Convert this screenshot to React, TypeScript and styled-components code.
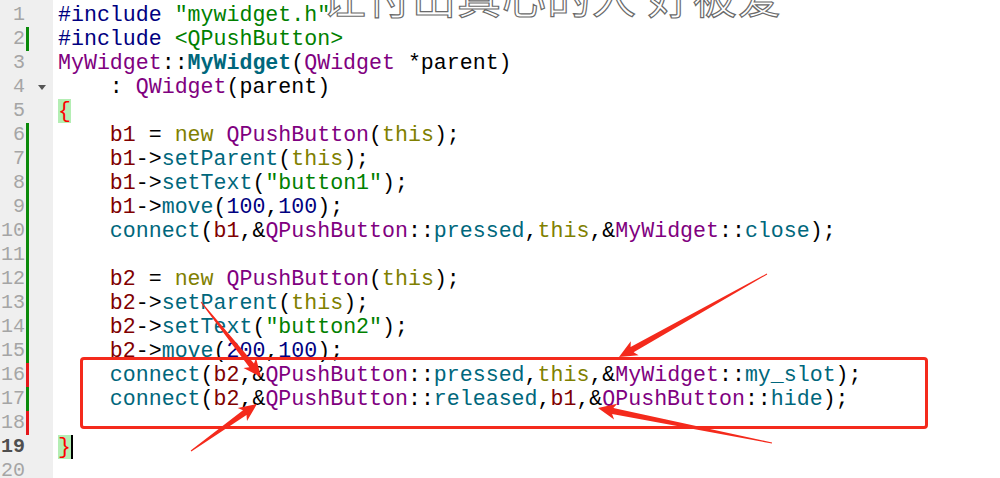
import React from "react";
import styled, { createGlobalStyle } from "styled-components";

type Kind = "pre" | "str" | "type" | "decl" | "kw" | "field" | "fn" | "num" | "plain" | "brace";
type Token = [string, Kind];

const GlobalStyle = createGlobalStyle`
    html, body {
        margin: 0;
        padding: 0;
        background: #ffffff;
        overflow: hidden;
    }
    #root {
        width: 1000px;
        height: 478px;
    }
`;

const colors: Record<Kind, string> = {
    pre: "#000080",
    str: "#008000",
    type: "#800080",
    decl: "#00677c",
    kw: "#808000",
    field: "#800000",
    fn: "#00677c",
    num: "#000080",
    plain: "#000000",
    brace: "#ff0000",
};

const Page = styled.div`
    position: relative;
    display: flex;
    width: 1000px;
    height: 478px;
    overflow: hidden;
    background: #ffffff;
`;

const Gutter = styled.div`
    width: 53px;
    flex-shrink: 0;
    background: #efefef;
    padding-top: 3px;
    display: flex;
    flex-direction: column;
`;

const GutterRow = styled.div`
    height: 24px;
    flex-shrink: 0;
    display: flex;
    align-items: stretch;
`;

const LineNo = styled.span<{ $current?: boolean }>`
    width: 25px;
    text-align: right;
    font-family: "Liberation Mono", "Courier New", monospace;
    font-size: 20px;
    line-height: 24px;
    color: ${(p) => (p.$current ? "#4f4f4f" : "#a5a5a5")};
    font-weight: ${(p) => (p.$current ? 700 : 400)};
`;

const DiffMark = styled.span<{ $state?: "add" | "del" }>`
    width: 3px;
    margin-left: 1px;
    background: ${(p) => (p.$state === "add" ? "#0a8a0a" : p.$state === "del" ? "#e5171b" : "transparent")};
`;

const Fold = styled.span`
    margin-left: 9px;
    margin-top: 10px;
    width: 0;
    height: 0;
    border-left: 4px solid transparent;
    border-right: 4px solid transparent;
    border-top: 5px solid #555555;
`;

const Code = styled.div`
    flex: 1;
    padding-top: 3px;
    padding-left: 5px;
    display: flex;
    flex-direction: column;
`;

const CodeLine = styled.div`
    height: 24px;
    flex-shrink: 0;
    display: flex;
    align-items: center;
    white-space: pre;
    font-family: "Liberation Mono", "Courier New", monospace;
    font-size: 21.6px;
    line-height: 24px;
`;

const Tok = styled.span<{ $kind: Kind }>`
    color: ${(p) => colors[p.$kind]};
    font-weight: ${(p) => (p.$kind === "decl" ? 700 : 400)};
    background: ${(p) => (p.$kind === "brace" ? "#b4eeb4" : "transparent")};
`;

const Cursor = styled.span`
    display: inline-block;
    width: 2px;
    height: 24px;
    background: #000000;
`;

const Watermark = styled.div`
    position: absolute;
    left: 322px;
    top: -27px;
    font-family: "Noto Sans CJK SC", "Noto Sans", sans-serif;
    font-size: 44px;
    line-height: 1;
    letter-spacing: 1px;
    color: #ffffff;
    -webkit-text-stroke: 1.2px #6a6a6a;
    white-space: pre;
`;

const Highlight = styled.div`
    position: absolute;
    left: 80px;
    top: 357px;
    width: 848px;
    height: 72px;
    box-sizing: border-box;
    border: 3px solid #f42a1c;
    border-radius: 4px;
`;

const Overlay = styled.svg`
    position: absolute;
    left: 0;
    top: 0;
    pointer-events: none;
`;

const lines: Token[][] = [
    [["#include ", "pre"], ['"mywidget.h"', "str"]],
    [["#include ", "pre"], ["<QPushButton>", "str"]],
    [["MyWidget", "type"], ["::", "plain"], ["MyWidget", "decl"], ["(", "plain"], ["QWidget", "type"], [" *parent)", "plain"]],
    [["    : ", "plain"], ["QWidget", "type"], ["(parent)", "plain"]],
    [["{", "brace"]],
    [["    ", "plain"], ["b1", "field"], [" = ", "plain"], ["new", "kw"], [" ", "plain"], ["QPushButton", "type"], ["(", "plain"], ["this", "kw"], [");", "plain"]],
    [["    ", "plain"], ["b1", "field"], ["->", "plain"], ["setParent", "fn"], ["(", "plain"], ["this", "kw"], [");", "plain"]],
    [["    ", "plain"], ["b1", "field"], ["->", "plain"], ["setText", "fn"], ["(", "plain"], ['"button1"', "str"], [");", "plain"]],
    [["    ", "plain"], ["b1", "field"], ["->", "plain"], ["move", "fn"], ["(", "plain"], ["100", "num"], [",", "plain"], ["100", "num"], [");", "plain"]],
    [["    ", "plain"], ["connect", "fn"], ["(", "plain"], ["b1", "field"], [",&", "plain"], ["QPushButton", "type"], ["::", "plain"], ["pressed", "fn"], [",", "plain"], ["this", "kw"], [",&", "plain"], ["MyWidget", "type"], ["::", "plain"], ["close", "fn"], [");", "plain"]],
    [],
    [["    ", "plain"], ["b2", "field"], [" = ", "plain"], ["new", "kw"], [" ", "plain"], ["QPushButton", "type"], ["(", "plain"], ["this", "kw"], [");", "plain"]],
    [["    ", "plain"], ["b2", "field"], ["->", "plain"], ["setParent", "fn"], ["(", "plain"], ["this", "kw"], [");", "plain"]],
    [["    ", "plain"], ["b2", "field"], ["->", "plain"], ["setText", "fn"], ["(", "plain"], ['"button2"', "str"], [");", "plain"]],
    [["    ", "plain"], ["b2", "field"], ["->", "plain"], ["move", "fn"], ["(", "plain"], ["200", "num"], [",", "plain"], ["100", "num"], [");", "plain"]],
    [["    ", "plain"], ["connect", "fn"], ["(", "plain"], ["b2", "field"], [",&", "plain"], ["QPushButton", "type"], ["::", "plain"], ["pressed", "fn"], [",", "plain"], ["this", "kw"], [",&", "plain"], ["MyWidget", "type"], ["::", "plain"], ["my_slot", "fn"], [");", "plain"]],
    [["    ", "plain"], ["connect", "fn"], ["(", "plain"], ["b2", "field"], [",&", "plain"], ["QPushButton", "type"], ["::", "plain"], ["released", "fn"], [",", "plain"], ["b1", "field"], [",&", "plain"], ["QPushButton", "type"], ["::", "plain"], ["hide", "fn"], [");", "plain"]],
    [],
    [["}", "brace"]],
    [],
];

// diff markers in the gutter, keyed by line number
const diff: Record<number, "add" | "del"> = {
    2: "add", 6: "add", 7: "add", 8: "add", 9: "add", 10: "add", 11: "add",
    12: "add", 13: "add", 14: "add", 15: "add", 16: "del", 17: "add", 18: "del",
};

// tapered screenshot-tool arrow from tail to tip
function arrowPoints(tx: number, ty: number, hx: number, hy: number) {
    const dx = hx - tx;
    const dy = hy - ty;
    const len = Math.hypot(dx, dy);
    const ux = dx / len;
    const uy = dy / len;
    const nx = -uy;
    const ny = ux;
    const head = 15;
    const neck = 3;
    const barb = 8;
    const at = (u: number, v: number) => `${(tx + ux * u + nx * v).toFixed(1)},${(ty + uy * u + ny * v).toFixed(1)}`;
    return [
        at(0, -0.5),
        at(len - head, -neck),
        at(len - head - 3, -barb),
        at(len, 0),
        at(len - head - 3, barb),
        at(len - head, neck),
        at(0, 0.5),
    ].join(" ");
}

const arrows = [
    [201, 302, 261, 377],
    [767, 274, 619, 357],
    [191, 451, 257, 404],
    [772, 443, 598, 408],
];

export default function App() {
    return (
        <>
            <GlobalStyle />
            <Page>
                <Gutter>
                    {lines.map((_, i) => (
                        <GutterRow key={i}>
                            <LineNo $current={i + 1 === 19}>{i + 1}</LineNo>
                            <DiffMark $state={diff[i + 1]} />
                            {i + 1 === 4 && <Fold />}
                        </GutterRow>
                    ))}
                </Gutter>
                <Code>
                    {lines.map((toks, i) => (
                        <CodeLine key={i}>
                            {toks.map(([text, kind], j) => (
                                <Tok key={j} $kind={kind}>
                                    {text}
                                </Tok>
                            ))}
                            {i + 1 === 19 && <Cursor />}
                        </CodeLine>
                    ))}
                </Code>
                <Watermark>让付出真心的人 好被爱</Watermark>
                <Highlight />
                <Overlay width={1000} height={478}>
                    {arrows.map(([a, b, c, d], i) => (
                        <polygon key={i} points={arrowPoints(a, b, c, d)} fill="#f42a1c" />
                    ))}
                </Overlay>
            </Page>
        </>
    );
}
